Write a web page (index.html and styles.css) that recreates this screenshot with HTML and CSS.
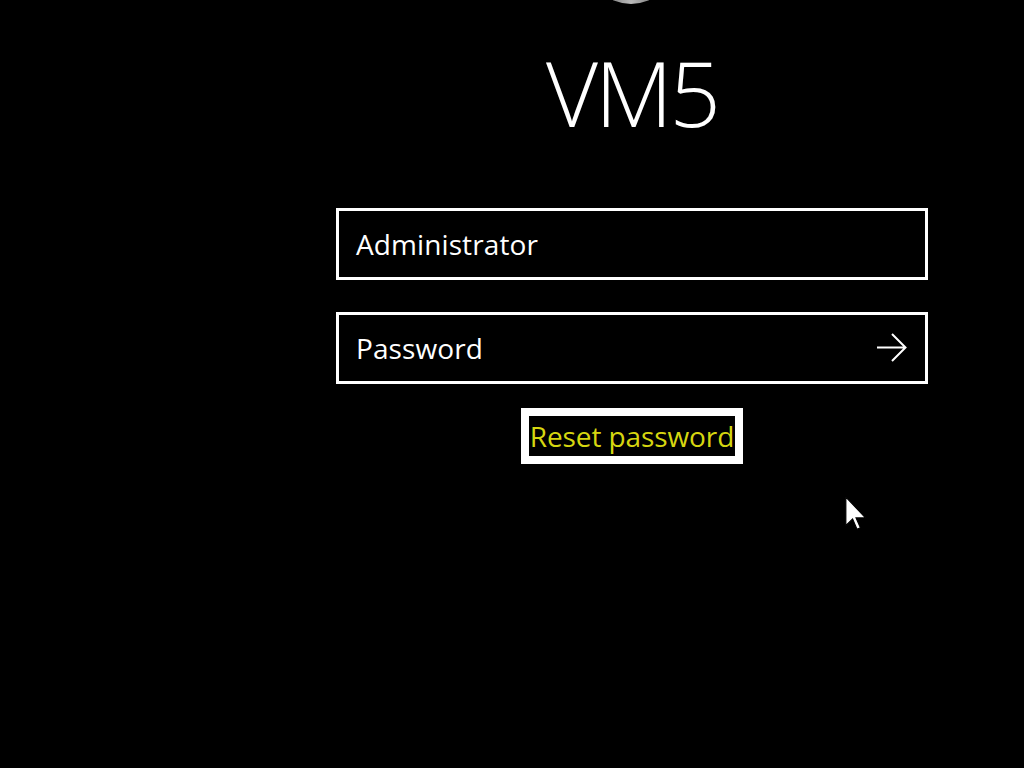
FILE: index.html
```html
<!DOCTYPE html>
<html>
<head>
<meta charset="utf-8">
<link rel="stylesheet" href="styles.css">
</head>
<body>
<div class="screen">
  <div class="avatar"></div>
  <div class="panel">
    <div class="name">VM5</div>
    <div class="field field-user"><span class="field-text">Administrator</span></div>
    <div class="field field-pass">
      <span class="field-text">Password</span>
      <svg class="arrow" width="32" height="32" viewBox="0 0 32 32"><path d="M1 15.5 H29.5 M16 2 L29.5 15.5 L16 29" fill="none" stroke="#fff" stroke-width="2"/></svg>
    </div>
    <div class="reset"><span class="reset-text">Reset password</span></div>
  </div>
  <svg class="cursor" width="23" height="36" viewBox="0 0 13 20"><path d="M0.5 0.5 V16.5 L4.3 12.8 L6.8 18.6 L8.7 17.8 L6.2 12.2 L11.6 12.2 Z" fill="#fff" stroke="#000" stroke-width="0.6"/></svg>
</div>
</body>
</html>
```
FILE: styles.css
```css
html, body { margin: 0; padding: 0; background: #000; }
.screen { position: relative; width: 1024px; height: 768px; overflow: hidden; background: #000; font-family: "Open Sans", "Segoe UI", sans-serif; color: #fff; }
.avatar { position: absolute; left: 588px; top: -80px; width: 86px; height: 84px; border-radius: 50%; background: radial-gradient(ellipse at 50% 100%, #bbb 0%, #777 40%, #333 70%); }
.panel { display: flex; flex-direction: column; align-items: center; width: 592px; padding-left: 336px; padding-top: 44px; }
.name { font-size: 90px; font-weight: 300; line-height: 96px; height: 96px; letter-spacing: -3px; margin-bottom: 68px; }
.field { box-sizing: border-box; width: 592px; height: 72px; border: 3px solid #fff; display: flex; align-items: center; padding-left: 17px; padding-right: 17px; margin-bottom: 32px; }
.field-text { font-size: 28px; flex: 1; letter-spacing: 0.1px; }
.arrow { display: block; }
.reset { margin-top: -8px; border: 8px solid #fff; width: 206px; height: 40px; display: flex; align-items: center; justify-content: center; }
.reset-text { color: #d6d610; font-size: 28px; white-space: nowrap; letter-spacing: -0.1px; }
.cursor { position: absolute; left: 845px; top: 496px; }
```
